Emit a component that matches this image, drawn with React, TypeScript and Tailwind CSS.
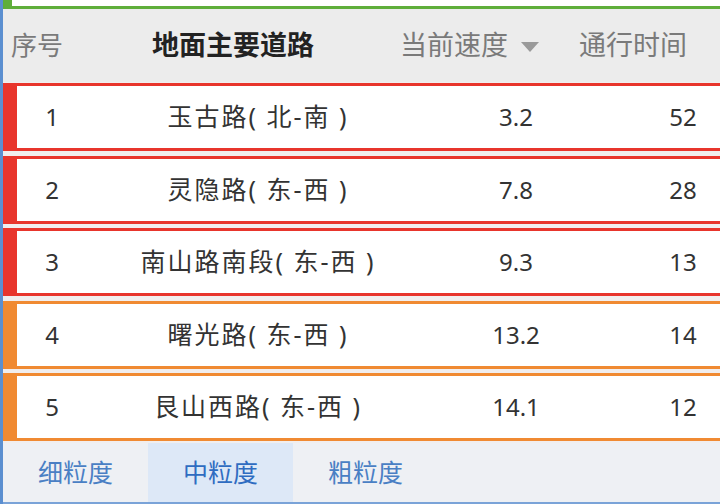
import React from "react";

type Row = { no: number; road: string; speed: string; time: string; level: "red" | "orange" };

const rows: Row[] = [
  { no: 1, road: "玉古路( 北-南 )", speed: "3.2", time: "52", level: "red" },
  { no: 2, road: "灵隐路( 东-西 )", speed: "7.8", time: "28", level: "red" },
  { no: 3, road: "南山路南段( 东-西 )", speed: "9.3", time: "13", level: "red" },
  { no: 4, road: "曙光路( 东-西 )", speed: "13.2", time: "14", level: "orange" },
  { no: 5, road: "艮山西路( 东-西 )", speed: "14.1", time: "12", level: "orange" },
];

const font = { fontFamily: '"Noto Sans", "Noto Sans CJK SC", sans-serif' };

export default function App() {
  return (
    <div className="w-[720px] h-[504px] overflow-hidden bg-[#f1eeee] border-l-[3px] border-[#5b8fd0] flex flex-col" style={font}>
      {/* previous card edge */}
      <div className="h-[9px] shrink-0 bg-white border-b-[3px] border-l-[9px] border-[#5fae3a]" />

      {/* Header */}
      <div className="h-[73px] shrink-0 bg-[#ececec] flex items-center text-[27px] text-[#7a7a7a]">
        <div className="w-[149px] pl-[8px] text-[26px]">序号</div>
        <div className="w-[248px] font-bold text-[#222]">地面主要道路</div>
        <div className="w-[179px] flex items-center">
          <span>当前速度</span>
          <svg width="18" height="10" viewBox="0 0 18 10" className="ml-[13px] mt-[2px]">
            <path d="M0 0 L18 0 L9 10 Z" fill="#9a9a9a" />
          </svg>
        </div>
        <div>通行时间</div>
      </div>

      {/* Rows */}
      <div className="flex flex-col gap-[4.5px] pt-[1px]">
        {rows.map((r) => (
          <div
            key={r.no}
            className={
              "h-[68px] w-[780px] flex items-center bg-white border-t-[3px] border-b-[3px] border-l-[14px] text-[24px] text-[#333] " +
              (r.level === "red" ? "border-[#e8352c]" : "border-[#f08a32]")
            }
          >
            <div className="w-[70px] text-center">{r.no}</div>
            <div className="w-[342px] text-center whitespace-nowrap text-[25px] tracking-[2px]">{r.road}</div>
            <div className="w-[174px] text-center">{r.speed}</div>
            <div className="w-[160px] text-center">{r.time}</div>
          </div>
        ))}
      </div>

      {/* Tabs */}
      <div className="mt-[2px] flex-1 bg-[#eef0f4] border-b-[2px] border-[#7aa3d8] flex text-[25px] text-[#4a7fc4]">
        <div className="w-[145px] flex items-center justify-center">细粒度</div>
        <div className="w-[145px] flex items-center justify-center bg-[#dde8f7] text-[#2f6cc1]">中粒度</div>
        <div className="w-[145px] flex items-center justify-center">粗粒度</div>
      </div>
    </div>
  );
}
